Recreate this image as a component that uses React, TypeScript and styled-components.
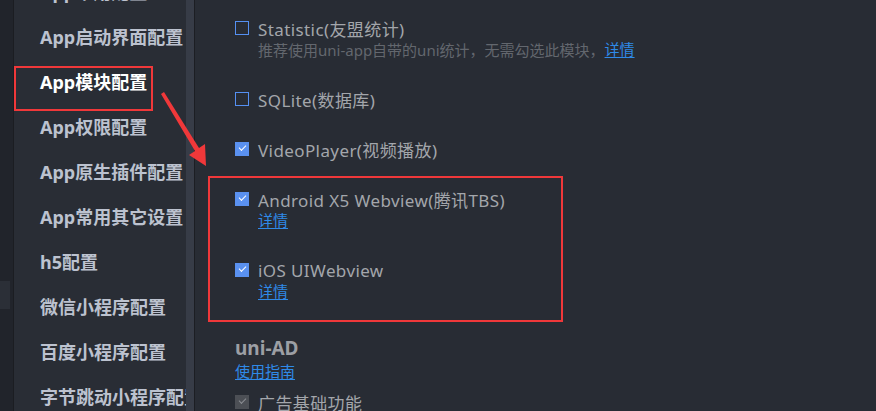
import styled, { createGlobalStyle } from "styled-components";

const GlobalStyle = createGlobalStyle`
  html, body {
    margin: 0;
    padding: 0;
    background: #282c34;
    overflow: hidden;
  }
  body {
    font-family: "Noto Sans", "Noto Sans CJK SC", sans-serif;
  }
`;

const sideItems = [
  "App常用配置",
  "App启动界面配置",
  "App模块配置",
  "App权限配置",
  "App原生插件配置",
  "App常用其它设置",
  "h5配置",
  "微信小程序配置",
  "百度小程序配置",
  "字节跳动小程序配置",
];

interface ModuleItem {
  label: string;
  checked: boolean;
  desc?: string;
  link?: boolean;
}

const modules: ModuleItem[] = [
  {
    label: "Statistic(友盟统计)",
    checked: false,
    desc: "推荐使用uni-app自带的uni统计，无需勾选此模块，",
    link: true,
  },
  { label: "SQLite(数据库)", checked: false },
  { label: "VideoPlayer(视频播放)", checked: true },
  { label: "Android X5 Webview(腾讯TBS)", checked: true, link: true },
  { label: "iOS UIWebview", checked: true, link: true },
];

export default function App() {
  return (
    <Page>
      <GlobalStyle />
      <LeftStrip>
        <StripMark />
      </LeftStrip>
      <Sidebar>
        <SideList>
          {sideItems.map((item, i) => (
            <SideItem key={item} $active={i === 2}>
              {item}
            </SideItem>
          ))}
        </SideList>
        <Scrollbar />
      </Sidebar>
      <Main>
        {modules.map((m) => (
          <Module key={m.label}>
            <Row>
              <Check $checked={m.checked} />
              <Label>{m.label}</Label>
            </Row>
            {(m.desc || m.link) && (
              <Sub>
                {m.desc && <Desc>{m.desc}</Desc>}
                {m.link && <Link>详情</Link>}
              </Sub>
            )}
          </Module>
        ))}
        <Section>
          <SectionTitle>uni-AD</SectionTitle>
          <Link>使用指南</Link>
          <Row $top={9}>
            <Check $checked $disabled />
            <Label>广告基础功能</Label>
          </Row>
        </Section>
      </Main>

      <RedBox style={{ left: 14, top: 66, width: 139, height: 45 }} />
      <RedBox style={{ left: 208, top: 176, width: 355, height: 146 }} />
      <Arrow width="60" height="80" viewBox="0 0 60 80">
        <polygon points="4,2 7,0 42,56 48,52 49,74 32,63 38,59" fill="#f0383a" />
      </Arrow>
    </Page>
  );
}

const Page = styled.div`
  position: relative;
  display: flex;
  width: 876px;
  height: 411px;
  overflow: hidden;
  background: #282c34;
`;

const LeftStrip = styled.div`
  width: 13px;
  flex-shrink: 0;
  background: #21242b;
  border-right: 1px solid #1b1d22;
  padding-top: 281px;
`;

const StripMark = styled.div`
  width: 10px;
  height: 28px;
  background: #2b2f37;
`;

const Sidebar = styled.div`
  width: 180px;
  flex-shrink: 0;
  display: flex;
  background: #292d35;
  border-right: 1px solid #1c1e23;
`;

const SideList = styled.div`
  flex: 1;
  display: flex;
  flex-direction: column;
  padding-left: 26px;
  margin-top: -30px;
  overflow: hidden;
  white-space: nowrap;
`;

const SideItem = styled.div<{ $active?: boolean }>`
  height: 45px;
  line-height: 45px;
  flex-shrink: 0;
  font-family: "Noto Sans", "Noto Sans CJK SC", sans-serif;
  font-size: 18px;
  font-weight: 700;
  color: ${(p) => (p.$active ? "#ffffff" : "#bcc2cf")};
`;

const Scrollbar = styled.div`
  width: 8px;
  background: #373c47;
`;

const Main = styled.div`
  flex: 1;
  display: flex;
  flex-direction: column;
  gap: 28px;
  padding: 17px 0 0 40px;
`;

const Module = styled.div`
  display: flex;
  flex-direction: column;
`;

const Row = styled.div<{ $top?: number }>`
  display: flex;
  align-items: center;
  gap: 9px;
  height: 22px;
  margin-top: ${(p) => p.$top ?? 0}px;
`;

const Check = styled.span<{ $checked?: boolean; $disabled?: boolean }>`
  position: relative;
  width: 14px;
  height: 14px;
  box-sizing: border-box;
  flex-shrink: 0;
  border: ${(p) => (p.$checked ? "none" : "1.5px solid #5590f2")};
  background: ${(p) =>
    p.$disabled ? "#4c4f55" : p.$checked ? "#5a91f0" : "transparent"};

  &::after {
    content: "";
    display: ${(p) => (p.$checked ? "block" : "none")};
    position: absolute;
    left: 4px;
    top: 3px;
    width: 6px;
    height: 3px;
    border-left: 1.5px solid ${(p) => (p.$disabled ? "#8a8d92" : "#ffffff")};
    border-bottom: 1.5px solid ${(p) => (p.$disabled ? "#8a8d92" : "#ffffff")};
    transform: rotate(-45deg);
  }
`;

const Label = styled.span`
  font-size: 17px;
  letter-spacing: 0.4px;
  color: #a3a6ab;
  white-space: nowrap;
`;

const Sub = styled.div`
  display: flex;
  align-items: center;
  padding-left: 23px;
  height: 21px;
`;

const Desc = styled.span`
  font-size: 15px;
  color: #63676e;
  white-space: nowrap;
`;

const Link = styled.a`
  font-size: 15px;
  color: #2f8ae8;
  text-decoration: underline;
  text-underline-offset: 2px;
  cursor: pointer;
  align-self: flex-start;
  line-height: 21px;
`;

const Section = styled.div`
  display: flex;
  flex-direction: column;
  margin-top: 5px;
`;

const SectionTitle = styled.div`
  font-size: 19px;
  font-weight: 700;
  color: #9c9fa4;
  line-height: 26px;
`;

const RedBox = styled.div`
  position: absolute;
  box-sizing: border-box;
  border: 2.5px solid #f0383a;
`;

const Arrow = styled.svg`
  position: absolute;
  left: 157px;
  top: 92px;
`;
